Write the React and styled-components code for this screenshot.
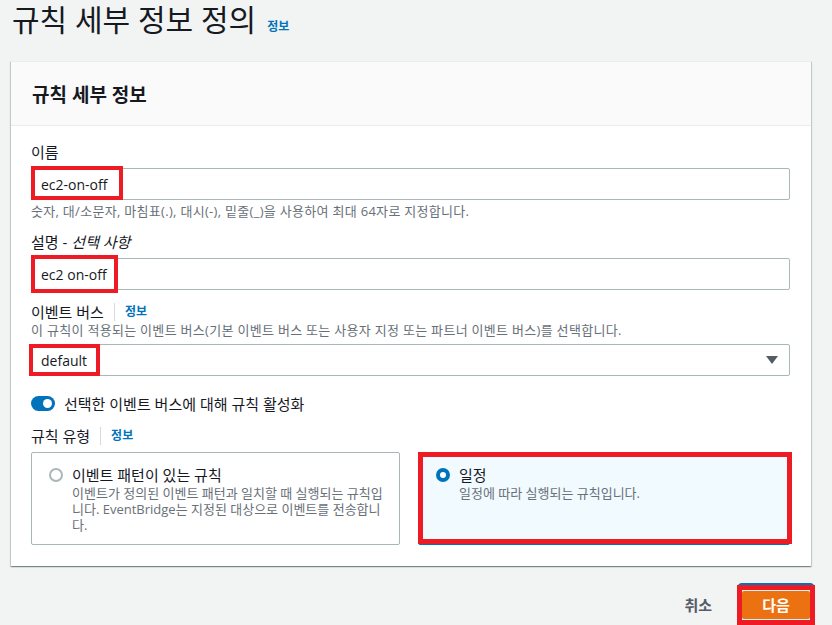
import styled, { createGlobalStyle } from "styled-components"

const GlobalStyle = createGlobalStyle`
  body {
    margin: 0;
    background: #f2f3f3;
    font-family: 'Open Sans', 'Noto Sans CJK KR', sans-serif;
    color: #16191f;
  }
`

const Page = styled.div`
  width: 832px;
  height: 625px;
  overflow: hidden;
`

const TitleRow = styled.div`
  display: flex;
  align-items: baseline;
  gap: 11px;
  padding: 0 0 0 12px;
  height: 61px;
  box-sizing: border-box;

  h1 {
    margin: 0;
    font-size: 30px;
    font-weight: 400;
    line-height: 40px;
  }
`

const InfoLink = styled.a`
  color: #0073bb;
  font-size: 12px;
  font-weight: 700;
  text-decoration: none;
`

const Card = styled.section`
  margin-left: 11px;
  width: 800px;
  background: #fff;
  border-top: 1px solid #eaeded;
  box-shadow: 0 1px 1px 0 rgba(0, 28, 36, 0.3), 1px 1px 1px 0 rgba(0, 28, 36, 0.15),
    -1px 1px 1px 0 rgba(0, 28, 36, 0.15);
`

const CardHeader = styled.header`
  height: 63px;
  display: flex;
  align-items: center;
  padding: 0 21px;
  background: #fafafa;
  border-bottom: 1px solid #eaeded;

  h2 {
    margin: 0;
    font-size: 19px;
    font-weight: 700;
  }
`

const CardBody = styled.div`
  padding: 15px 21px 21px 20px;
`

const Field = styled.div`
  margin-top: ${(p) => p.$top || 0}px;
`

const Label = styled.div`
  display: flex;
  align-items: center;
  font-size: 15px;
  line-height: 22px;

  i {
    margin-left: 4px;
  }
`

const Divider = styled.span`
  width: 1px;
  height: 18px;
  background: #d5dbdb;
  margin: 0 10px;
`

const Hint = styled.div`
  font-size: 13px;
  letter-spacing: 0.3px;
  line-height: ${(p) => p.$lh || 16}px;
  color: #687078;
  margin-top: ${(p) => p.$top || 0}px;
`

const Control = styled.div`
  position: relative;
  margin-top: ${(p) => p.$top || 5}px;
`

const Input = styled.div`
  height: 32px;
  box-sizing: border-box;
  border: 1px solid #aab7b8;
  border-radius: 2px;
  padding: 0 9px;
  display: flex;
  align-items: center;
  justify-content: space-between;
  font-size: 14px;
  background: #fff;
`

const Caret = styled.span`
  width: 0;
  height: 0;
  border-left: 6px solid transparent;
  border-right: 6px solid transparent;
  border-top: 8px solid #545b64;
  margin-right: 2px;
`

const Highlight = styled.span`
  position: absolute;
  top: ${(p) => p.$t}px;
  left: ${(p) => p.$l}px;
  width: ${(p) => p.$w}px;
  height: ${(p) => p.$h}px;
  box-sizing: border-box;
  border: ${(p) => p.$b || 4}px solid #ed1c24;
  pointer-events: none;
`

const ToggleRow = styled.label`
  display: flex;
  align-items: center;
  gap: 9px;
  margin-top: 17px;
  height: 20px;
  font-size: 15px;
`

const Toggle = styled.span`
  position: relative;
  width: 24px;
  height: 15px;
  border-radius: 8px;
  background: #0073bb;

  &::after {
    content: "";
    position: absolute;
    right: 3px;
    top: 3px;
    width: 9px;
    height: 9px;
    border-radius: 50%;
    background: #fff;
  }
`

const Tiles = styled.div`
  display: grid;
  grid-template-columns: 369px 372px;
  gap: 18px;
  margin-top: 5px;
`

const Tile = styled.div`
  position: relative;
  display: flex;
  gap: 9px;
  min-height: 91px;
  box-sizing: border-box;
  padding: 12px 14px 11px 17px;
  border: 1px solid ${(p) => (p.$selected ? "#0073bb" : "#aab7b8")};
  border-radius: 2px;
  background: ${(p) => (p.$selected ? "#f1faff" : "#fff")};
`

const Radio = styled.span`
  flex: none;
  width: 14px;
  height: 14px;
  margin-top: 3px;
  box-sizing: border-box;
  border-radius: 50%;
  border: ${(p) => (p.$checked ? "4px solid #0073bb" : "2px solid #aab7b8")};
  background: #fff;
`

const TileText = styled.div`
  strong {
    display: block;
    font-size: 15px;
    font-weight: 400;
    line-height: 20px;
  }

  p {
    margin: 0;
    font-size: 13px;
    line-height: 16px;
    color: #687078;
  }
`

const Footer = styled.div`
  display: flex;
  justify-content: flex-end;
  align-items: center;
  gap: 8px;
  padding: 24px 22px 0 0;
`

const LinkButton = styled.button`
  border: none;
  background: none;
  font: inherit;
  font-size: 15px;
  font-weight: 700;
  color: #545b64;
  padding: 4px 22px 4px 20px;
`

const ButtonWrap = styled.div`
  position: relative;

  &::before {
    content: "";
    position: absolute;
    top: -8px;
    left: -5px;
    right: -5px;
    bottom: -6px;
    border: 2px solid #0073bb;
    border-radius: 5px;
  }
`

const PrimaryButton = styled.button`
  position: relative;
  display: block;
  width: 68px;
  height: 28px;
  border: none;
  border-radius: 2px;
  background: #ec7211;
  color: #fff;
  font: inherit;
  font-size: 15px;
  font-weight: 700;
`

export default function App() {
  return (
    <Page>
      <GlobalStyle />
      <TitleRow>
        <h1>규칙 세부 정보 정의</h1>
        <InfoLink>정보</InfoLink>
      </TitleRow>

      <Card>
        <CardHeader>
          <h2>규칙 세부 정보</h2>
        </CardHeader>
        <CardBody>
          <Field>
            <Label>이름</Label>
            <Control>
              <Input>ec2-on-off</Input>
              <Highlight $t={-2} $l={0} $w={92} $h={34} />
            </Control>
            <Hint $top={3}>
              숫자, 대/소문자, 마침표(.), 대시(-), 밑줄(_)을 사용하여 최대 64자로 지정합니다.
            </Hint>
          </Field>

          <Field $top={12}>
            <Label>
              설명 - <i>선택 사항</i>
            </Label>
            <Control>
              <Input>ec2 on-off</Input>
              <Highlight $t={-3} $l={0} $w={87} $h={38} />
            </Control>
          </Field>

          <Field $top={11}>
            <Label>
              이벤트 버스
              <Divider />
              <InfoLink>정보</InfoLink>
            </Label>
            <Hint $lh={14}>
              이 규칙이 적용되는 이벤트 버스(기본 이벤트 버스 또는 사용자 지정 또는 파트너 이벤트 버스)를 선택합니다.
            </Hint>
            <Control $top={7}>
              <Input>
                default
                <Caret />
              </Input>
              <Highlight $t={0} $l={-2} $w={71} $h={32} />
            </Control>
          </Field>

          <ToggleRow>
            <Toggle />
            선택한 이벤트 버스에 대해 규칙 활성화
          </ToggleRow>

          <Field $top={12}>
            <Label>
              규칙 유형
              <Divider />
              <InfoLink>정보</InfoLink>
            </Label>
            <Tiles>
              <Tile>
                <Radio />
                <TileText>
                  <strong>이벤트 패턴이 있는 규칙</strong>
                  <p>
                    이벤트가 정의된 이벤트 패턴과 일치할 때 실행되는 규칙입니다. EventBridge는 지정된 대상으로 이벤트를 전송합니다.
                  </p>
                </TileText>
              </Tile>
              <Tile $selected>
                <Radio $checked />
                <TileText>
                  <strong>일정</strong>
                  <p>일정에 따라 실행되는 규칙입니다.</p>
                </TileText>
                <Highlight $t={-1} $l={-1} $w={374} $h={92} $b={5} />
              </Tile>
            </Tiles>
          </Field>
        </CardBody>
      </Card>

      <Footer>
        <LinkButton>취소</LinkButton>
        <ButtonWrap>
          <PrimaryButton>다음</PrimaryButton>
          <Highlight $t={-6} $l={-5} $w={78} $h={40} $b={5} />
        </ButtonWrap>
      </Footer>
    </Page>
  )
}
